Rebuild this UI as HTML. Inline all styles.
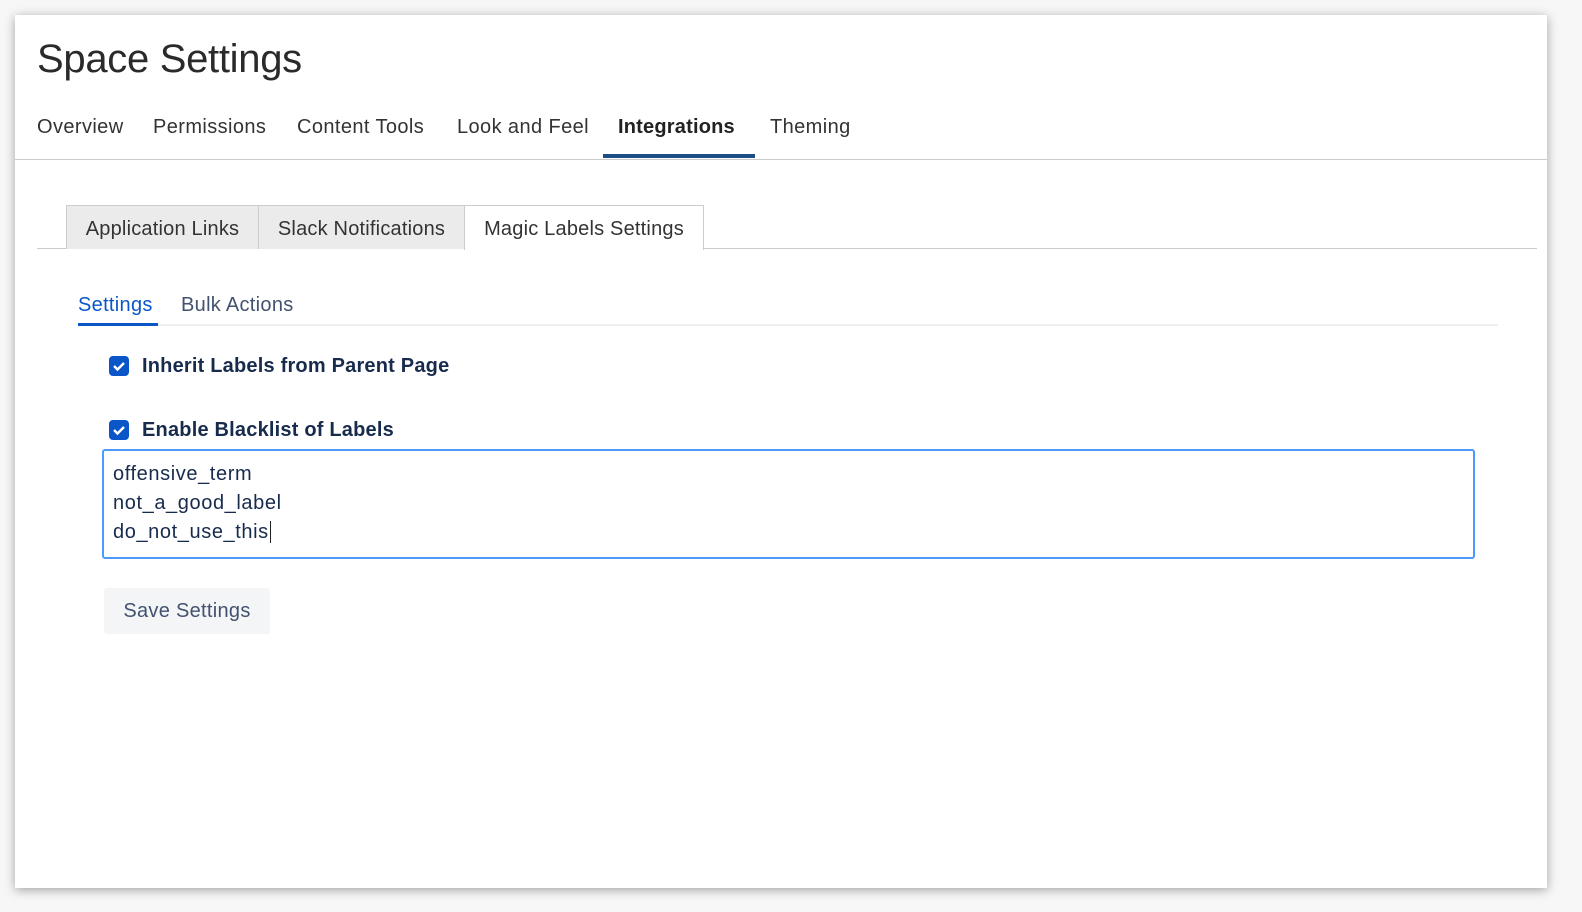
<!DOCTYPE html>
<html><head><style>
body{margin:0;width:1582px;height:912px;background:#f7f7f7;font-family:"Liberation Sans",sans-serif;position:relative;overflow:hidden}
.p{position:absolute;left:15px;top:15px;width:1532px;height:873px;background:#fff;box-shadow:0 2px 10px rgba(0,0,0,.35)}
.a{position:absolute;white-space:nowrap}
h1{position:absolute;left:22px;top:22px;margin:0;font-weight:normal;font-size:40px;color:#2a2a2a;letter-spacing:-0.3px}
.nav{font-size:20px;color:#333;top:101px;letter-spacing:0.4px}
.tab{position:absolute;top:190px;height:44px;background:#ebebeb;border:1px solid #ccc;border-bottom:none;font-size:20px;color:#333;line-height:46px;text-align:center;box-sizing:border-box;letter-spacing:0.2px}
.cb{position:absolute;width:20px;height:20px;background:#0a56c8;border-radius:4px}
.cb svg{position:absolute;left:3px;top:4px}
.lbl{font-size:20px;font-weight:bold;color:#172b4d;letter-spacing:0.2px}
</style></head><body>
<div class="p">
<h1>Space Settings</h1>
<div class="a nav" style="left:22px">Overview</div>
<div class="a nav" style="left:138px">Permissions</div>
<div class="a nav" style="left:282px">Content Tools</div>
<div class="a nav" style="left:442px">Look and Feel</div>
<div class="a nav" style="left:603px;font-weight:bold;color:#222;letter-spacing:0.2px">Integrations</div>
<div class="a nav" style="left:755px">Theming</div>
<div class="a" style="left:588px;top:139px;width:152px;height:4px;background:#1d4f86"></div>
<div class="a" style="left:0;top:144px;width:1532px;height:1px;background:#ccc"></div>
<div class="a" style="left:22px;top:233px;width:1500px;height:1px;background:#ccc"></div>
<div class="tab" style="left:51px;width:193px">Application Links</div>
<div class="tab" style="left:243px;width:207px">Slack Notifications</div>
<div class="tab" style="left:449px;width:240px;background:#fff;height:45px">Magic Labels Settings</div>
<div class="a" style="left:63px;top:279px;font-size:20px;color:#0a56c8;letter-spacing:0.3px">Settings</div>
<div class="a" style="left:166px;top:279px;font-size:20px;color:#42526e;letter-spacing:0.3px">Bulk Actions</div>
<div class="a" style="left:63px;top:309px;width:1420px;height:2px;background:#eee"></div>
<div class="a" style="left:63px;top:308px;width:80px;height:3px;background:#0a56c8"></div>
<div class="cb" style="left:94px;top:341px"><svg width="14" height="12"><path d="M2 6l3.5 3.5L12 3" stroke="#fff" stroke-width="2.4" fill="none"/></svg></div>
<div class="a lbl" style="left:127px;top:340px">Inherit Labels from Parent Page</div>
<div class="cb" style="left:94px;top:405px"><svg width="14" height="12"><path d="M2 6l3.5 3.5L12 3" stroke="#fff" stroke-width="2.4" fill="none"/></svg></div>
<div class="a lbl" style="left:127px;top:404px">Enable Blacklist of Labels</div>
<div class="a" style="left:87px;top:434px;width:1369px;height:106px;border:2px solid #4c9aff;border-radius:3px"></div>
<div class="a" style="left:98px;top:445px;font-size:20px;color:#172b4d;line-height:29px;letter-spacing:0.6px">offensive_term<br>not_a_good_label<br>do_not_use_this<span style="border-left:1.5px solid #222;margin-left:1px"></span></div>
<div class="a" style="left:89px;top:573px;width:166px;height:46px;background:#f4f5f7;border-radius:3px;font-size:20px;color:#42526e;line-height:46px;text-align:center;letter-spacing:0.3px">Save Settings</div>
</div>
</body></html>
